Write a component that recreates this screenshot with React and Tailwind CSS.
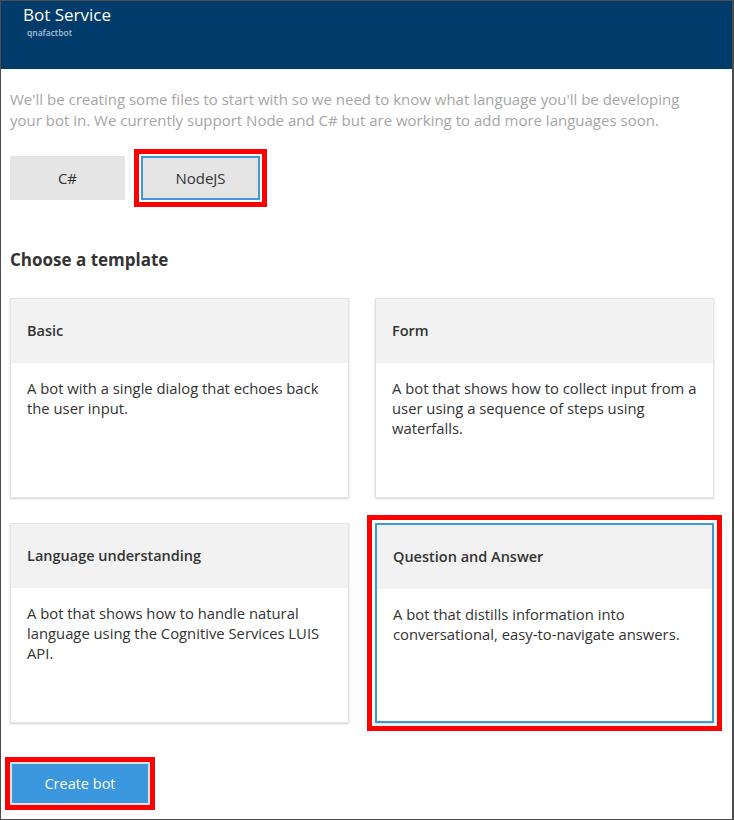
import { useState } from "react";

const templates = [
  {
    id: "basic",
    title: "Basic",
    text: "A bot with a single dialog that echoes back the user input.",
  },
  {
    id: "form",
    title: "Form",
    text: "A bot that shows how to collect input from a user using a sequence of steps using waterfalls.",
  },
  {
    id: "luis",
    title: "Language understanding",
    text: "A bot that shows how to handle natural language using the Cognitive Services LUIS API.",
  },
  {
    id: "qna",
    title: "Question and Answer",
    text: "A bot that distills information into conversational, easy-to-navigate answers.",
  },
];

const App = () => {
  const [language, setLanguage] = useState("node");
  const [template, setTemplate] = useState("qna");

  return (
    <div
      className="w-[734px] h-[820px] bg-white border-t border-l border-b border-r-2 border-[#4d4d4d] text-[#333] overflow-hidden"
      style={{ fontFamily: '"Segoe UI", "Open Sans", "Noto Sans", sans-serif' }}
    >
      {/* Header */}
      <div className="h-[68px] bg-[#003c6b] pl-[22px] pt-[2px]">
        <div className="text-[17px] leading-[24px] text-white">Bot Service</div>
        <div className="ml-[4px] text-[8.5px] leading-[12px] font-semibold text-[#a9c0d4]">
          qnafactbot
        </div>
      </div>

      <div className="pl-[9px]">
        <p className="mt-[20px] w-[700px] text-[15px] leading-[21px] text-[#a6a6a6]">
          We'll be creating some files to start with so we need to know what language you'll be developing
          <br />
          your bot in. We currently support Node and C# but are working to add more languages soon.
        </p>

        {/* Language buttons */}
        <div className="mt-[25px] flex gap-[16px]">
          <button
            onClick={() => setLanguage("cs")}
            className={`w-[115px] h-[44px] bg-[#e5e5e5] text-[15px] text-[#333] border-2 ${
              language === "cs"
                ? "border-[#3f97de] outline-[5px] outline-solid outline-[#ff0000] outline-offset-2"
                : "border-[#e5e5e5]"
            }`}
          >
            C#
          </button>
          <button
            onClick={() => setLanguage("node")}
            className={`w-[119px] h-[44px] bg-[#e5e5e5] text-[15px] text-[#333] border-2 ${
              language === "node"
                ? "border-[#3f97de] outline-[5px] outline-solid outline-[#ff0000] outline-offset-2"
                : "border-[#e5e5e5]"
            }`}
          >
            NodeJS
          </button>
        </div>

        <h2 className="mt-[48px] text-[17px] leading-[24px] font-bold text-[#333]">
          Choose a template
        </h2>

        {/* Templates */}
        <div className="mt-[26px] w-[704px] grid grid-cols-2 gap-x-[26px] gap-y-[25px]">
          {templates.map((t) => {
            const selected = template === t.id;
            return (
              <div
                key={t.id}
                onClick={() => setTemplate(t.id)}
                className={`h-[200px] bg-white cursor-pointer shadow-[0_1px_2px_rgba(0,0,0,0.18)] ${
                  selected
                    ? "border-2 border-[#3f97de] outline-[5px] outline-solid outline-[#ff0000] outline-offset-[3px]"
                    : "border border-[#e3e3e3]"
                }`}
              >
                <div className="h-[64px] bg-[#f2f2f2] px-4 flex items-center text-[14.5px] font-semibold text-[#333]">
                  {t.title}
                </div>
                <div className="px-4 pt-[15px] text-[14.8px] leading-[20px] text-[#333]">
                  {t.text}
                </div>
              </div>
            );
          })}
        </div>

        {/* Create */}
        <div className="mt-[39px]">
          <button className="w-[140px] h-[43px] bg-[#3a96dd] border-2 border-[#e3e3e3] text-white text-[14.5px] outline-[5px] outline-solid outline-[#ff0000]">
            Create bot
          </button>
        </div>
      </div>
    </div>
  );
};

export default App;
